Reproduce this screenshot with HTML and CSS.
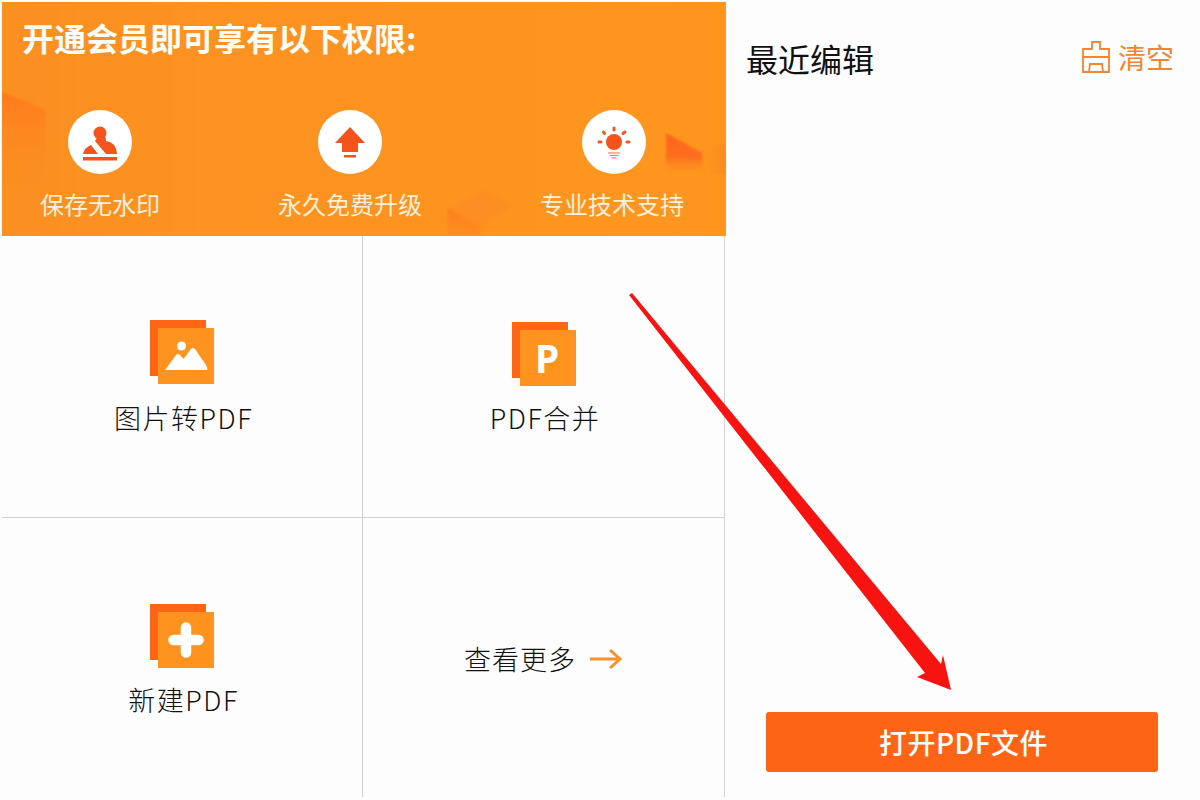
FILE: index.html
```html
<!DOCTYPE html>
<html lang="zh-CN">
<head>
<meta charset="utf-8">
<title>PDF</title>
<link rel="stylesheet" href="styles.css">
</head>
<body>
<div class="page">
  <main class="left">
    <section class="banner">
      <svg class="decor" width="724" height="234" viewBox="0 0 724 234">
        <defs>
          <linearGradient id="fadeA" x1="0" y1="0" x2="0" y2="1"><stop offset="0" stop-color="#ff7a1e"/><stop offset="1" stop-color="#fc8f22" stop-opacity="0"/></linearGradient>
          <linearGradient id="fadeB" x1="0" y1="0" x2="0" y2="1"><stop offset="0" stop-color="#ff641c"/><stop offset="0.6" stop-color="#ff6f1e"/><stop offset="1" stop-color="#fd8f20" stop-opacity="0"/></linearGradient>
          <linearGradient id="fadeC" x1="0" y1="0" x2="0" y2="1"><stop offset="0" stop-color="#ff7f20"/><stop offset="1" stop-color="#fe8d20"/></linearGradient>
          <linearGradient id="fadeD" x1="0" y1="0" x2="1" y2="0"><stop offset="0" stop-color="#fe9320" stop-opacity="0"/><stop offset="1" stop-color="#fe8a20"/></linearGradient>
        </defs>
        <path class="soft" d="M0 90 L44 108 V196 H0 Z" fill="url(#fadeA)"/>
        <path class="soft" d="M664 131 L700 151 V172 H664 Z" fill="url(#fadeB)"/>
        <path class="soft" d="M700 151 L724 141 V172 H700 Z" fill="url(#fadeD)"/>
        <path class="soft" d="M446 208 L480 188 L510 204 L479 224 V232 H446 Z" fill="#fd8e21"/>
        <path class="soft" d="M446 206 L479 226 V232 H446 Z" fill="url(#fadeC)"/>
      </svg>
      <h1 class="banner-title">开通会员即可享有以下权限:</h1>
      <ul class="perks">
        <li class="perk">
          <span class="perk-circle">
            <svg width="64" height="64" viewBox="0 0 64 64">
              <circle cx="32" cy="23" r="6.500" fill="#f4541c"/>
              <path d="M30 26 L37 23 L38 31 Q48 32 49 44 H38 L27 31 Z" fill="#f4541c"/>
              <path d="M15 44 Q16 38 23 35 L30 44 Z" fill="#f4541c"/>
              <path d="M15 47 H49 V50.500 H15 Z" fill="#f4541c"/>
            </svg>
          </span>
          <span class="perk-label">保存无水印</span>
        </li>
        <li class="perk">
          <span class="perk-circle">
            <svg width="64" height="64" viewBox="0 0 64 64">
              <path d="M32 17 L47 33 H40 V42 H24 V33 H17 Z" fill="#f4541c"/>
              <rect x="26" y="45" width="12" height="2.500" fill="#f4541c"/>
            </svg>
          </span>
          <span class="perk-label">永久免费升级</span>
        </li>
        <li class="perk">
          <span class="perk-circle perk-circle-shift">
            <svg width="64" height="64" viewBox="0 0 64 64">
              <circle cx="32" cy="32" r="8" fill="#f4541c"/>
              <g stroke="#f4541c" stroke-width="3" stroke-linecap="round">
                <path d="M32 18 V20"/>
                <path d="M21.500 22 L22.500 23.500"/>
                <path d="M43 22 L41 23.500"/>
                <path d="M17 32 H19"/>
                <path d="M45 32 H47"/>
              </g>
              <g stroke="#f7835a" stroke-width="1.200">
                <path d="M26 43 H38"/>
                <path d="M27.500 45.500 H36.500"/>
                <path d="M29.500 48 H34.500"/>
              </g>
            </svg>
          </span>
          <span class="perk-label">专业技术支持</span>
        </li>
      </ul>
    </section>
    <section class="tools">
      <a class="tool tool-a">
        <svg class="tool-icon" width="64" height="64" viewBox="0 0 64 64">
          <rect width="56" height="56" fill="#ff6514"/>
          <rect x="8" y="8" width="56" height="56" fill="#ff931f"/>
          <circle cx="31.500" cy="26" r="4.500" fill="#fff"/>
          <path d="M15.500 50 Q16 48 18 46 L26 35 Q28 33 30 35 L33.500 39 L41 29 Q43 27 45 29 L56 45 Q58 48 57 50 Z" fill="#fff"/>
        </svg>
        <span class="tool-label">图片转PDF</span>
      </a>
      <a class="tool tool-b">
        <svg class="tool-icon" width="64" height="64" viewBox="0 0 64 64">
          <rect width="56" height="56" fill="#ff6514"/>
          <rect x="8" y="8" width="56" height="56" fill="#ff931f"/>
          <text class="icon-letter" x="35" y="51" text-anchor="middle">P</text>
        </svg>
        <span class="tool-label tool-label-tight">PDF合并</span>
      </a>
      <a class="tool tool-c">
        <svg class="tool-icon" width="64" height="64" viewBox="0 0 64 64">
          <rect width="56" height="56" fill="#ff6514"/>
          <rect x="8" y="8" width="56" height="56" fill="#ff931f"/>
          <path d="M36 23.500 V48.500 M23.500 36 H48.500" stroke="#fff" stroke-width="10.500" stroke-linecap="round"/>
        </svg>
        <span class="tool-label tool-label-tight">新建PDF</span>
      </a>
      <a class="tool tool-more">
        <span class="tool-label tool-label-more">查看更多</span>
        <svg width="34" height="22" viewBox="0 0 34 22">
          <path d="M1 11 H31 M21 2 L31 11 L21 20" fill="none" stroke="#f7922a" stroke-width="3"/>
        </svg>
      </a>
    </section>
  </main>
  <aside class="recent">
    <header class="recent-head">
      <h2 class="recent-title">最近编辑</h2>
      <button class="clear">
        <svg width="28" height="32" viewBox="0 0 28 32">
          <path d="M10 8 V1 H18 V8 H27 V31 H1 V8 Z M1 16 H27 M7 31 L8 23 H20 L21 31" fill="none" stroke="#f28532" stroke-width="1.800"/>
        </svg>
        <span>清空</span>
      </button>
    </header>
    <button class="open">打开PDF文件</button>
  </aside>
  <svg class="pointer" width="1200" height="800" viewBox="0 0 1200 800">
    <polygon points="629,295 632,293 941,664 943,655 951,690 917,677 925,673" fill="#f71410"/>
  </svg>
</div>
</body>
</html>
```

FILE: styles.css
```css
* { box-sizing: border-box; }
html, body { margin: 0; padding: 0; }
body {
  width: 1200px;
  height: 800px;
  overflow: hidden;
  background: #fdfdfe;
  font-family: "Noto Sans CJK SC", "Noto Sans", sans-serif;
  color: #222;
}
.page {
  position: relative;
  display: flex;
  width: 1200px;
  height: 800px;
  padding: 2px 0 0 2px;
  overflow: hidden;
}
.left {
  width: 724px;
  flex: none;
  display: flex;
  flex-direction: column;
}
.banner {
  position: relative;
  height: 234px;
  flex: none;
  background: linear-gradient(90deg, #fb9022, #fe961e);
  color: #fff;
  overflow: hidden;
}
.decor { position: absolute; left: 0; top: 0; }
.soft { filter: blur(0.8px); }
.banner-title {
  position: relative;
  margin: 0;
  padding: 12px 0 0 20px;
  font-size: 32px;
  line-height: 46px;
  font-weight: 700;
  color: #fffdf8;
}
.perks {
  position: relative;
  display: flex;
  gap: 118px;
  margin: 50px 0 0;
  padding: 0 0 0 38px;
  list-style: none;
}
.perk {
  display: flex;
  flex-direction: column;
  align-items: center;
}
.perk-circle {
  display: block;
  width: 64px;
  height: 64px;
  border-radius: 50%;
  background: #fff;
}
.perk-circle svg { display: block; }
.perk-circle-shift { margin-left: 4px; }
.perk-label {
  margin-top: 12px;
  font-size: 24px;
  line-height: 36px;
  color: #fdf0dc;
  white-space: nowrap;
}
.tools {
  flex: 1;
  width: 723px;
  display: grid;
  grid-template-columns: 361px 362px;
  grid-template-rows: 282px 279px;
}
.tool {
  display: flex;
  flex-direction: column;
  align-items: center;
  border-right: 1px solid #d2d2d6;
}
.tool-a, .tool-b { border-bottom: 1px solid #d2d2d6; }
.tool-a { padding-top: 84px; }
.tool-b, .tool-c { padding-top: 86px; }
.tool-icon { display: block; }
.tool-label {
  margin: 16px 0 0 3px;
  font-size: 27px;
  line-height: 36px;
  font-weight: 300;
  letter-spacing: 1.500px;
  color: #111;
  white-space: nowrap;
}
.tool-label-tight { margin-top: 14px; }
.tool-more {
  flex-direction: row;
  justify-content: center;
  align-items: flex-start;
  gap: 13px;
  padding-top: 123px;
}
.tool-more .tool-label-more {
  margin: 0;
  font-size: 27px;
  letter-spacing: 1px;
}
.tool-more svg { margin-top: 7px; }
.icon-letter {
  font-family: "Noto Sans", sans-serif;
  font-size: 39px;
  font-weight: 700;
  fill: #fff;
}
.recent {
  flex: 1;
  display: flex;
  flex-direction: column;
}
.recent-head {
  display: flex;
  justify-content: space-between;
  align-items: flex-start;
  padding: 32px 26px 0 20px;
}
.recent-title {
  margin: 0;
  font-size: 32px;
  line-height: 48px;
  font-weight: 400;
  color: #111;
}
.clear {
  display: flex;
  align-items: center;
  gap: 8px;
  padding: 0;
  margin-top: 3px;
  border: 0;
  background: none;
  font: inherit;
  font-size: 28px;
  line-height: 40px;
  color: #f28532;
}
.clear svg { display: block; }
.open {
  margin: auto 42px 28px 40px;
  padding: 0 0 0 3px;
  height: 60px;
  flex: none;
  border: 0;
  border-radius: 3px;
  background: #fe6416;
  color: #fff;
  font: inherit;
  font-size: 28px;
  font-weight: 500;
  letter-spacing: 0.500px;
}
.pointer {
  position: absolute;
  left: 0;
  top: 0;
  pointer-events: none;
}
```
